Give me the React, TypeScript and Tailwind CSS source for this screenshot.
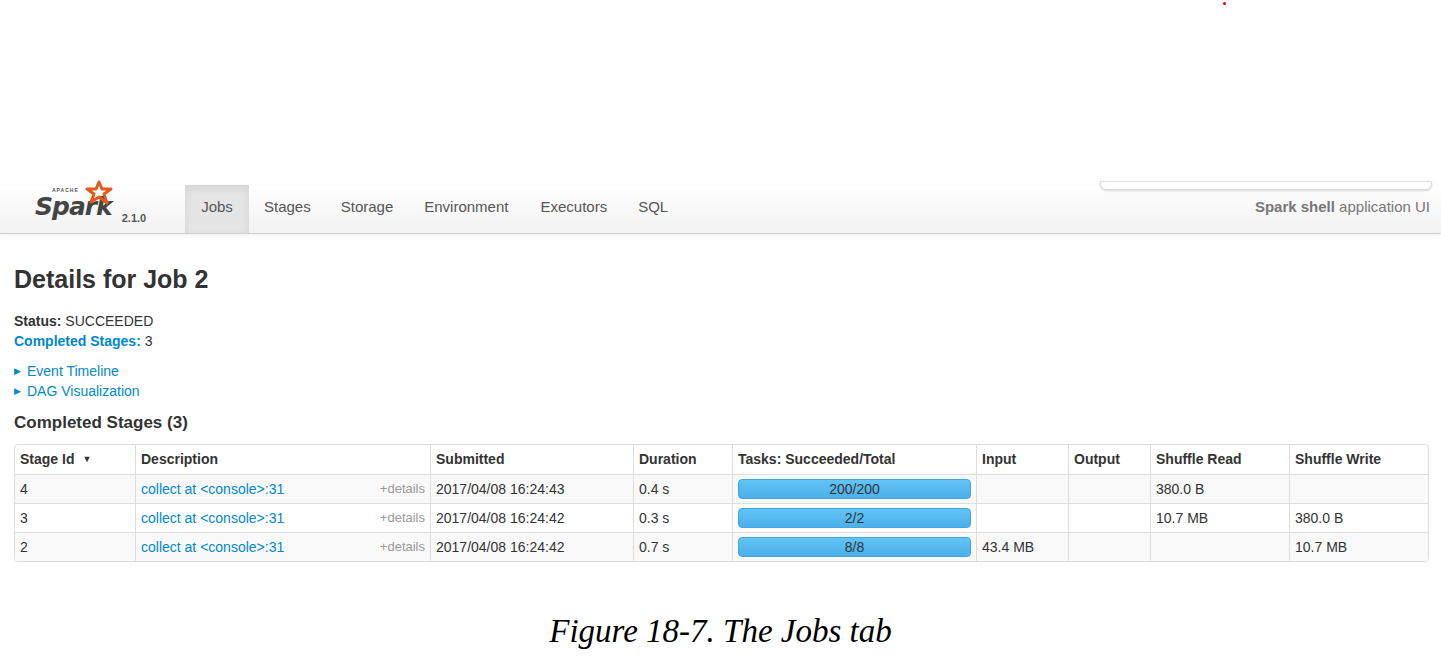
import React from "react";

const rows = [
  { id: "4", sub: "2017/04/08 16:24:43", dur: "0.4 s", tasks: "200/200", input: "", output: "", sr: "380.0 B", sw: "" },
  { id: "3", sub: "2017/04/08 16:24:42", dur: "0.3 s", tasks: "2/2", input: "", output: "", sr: "10.7 MB", sw: "380.0 B" },
  { id: "2", sub: "2017/04/08 16:24:42", dur: "0.7 s", tasks: "8/8", input: "43.4 MB", output: "", sr: "", sw: "10.7 MB" },
];
const cols = "grid grid-cols-[120px_295px_203px_99px_244px_92px_82px_139px_141px]";

export default function App() {
  return (
    <div className="relative w-[1441px] h-[658px] bg-white text-[#333] overflow-hidden" style={{ fontFamily: "'Liberation Sans', Arial, sans-serif" }}>
      <div className="absolute left-[1223px] top-[2px] w-[3px] h-[3px] rounded-full bg-[#e00]" />
      <div className="h-[185px]" />
      {/* navbar */}
      <div className="relative h-[49px] bg-gradient-to-b from-white to-[#f2f2f2] border-b border-[#d4d4d4] shadow-[0_1px_3px_rgba(0,0,0,0.08)] flex items-stretch">
        <div className="absolute left-[1100px] top-[-4px] w-[332px] h-[9px] bg-white rounded-b-md border border-[#ddd] shadow-[0_1px_2px_rgba(0,0,0,0.15)]" />
        <div className="w-[185px] relative flex items-end pl-[35px] pb-[11px]">
          <div className="relative">
            <span className="absolute left-[17px] top-[-6px] text-[5px] leading-none tracking-[1px] font-bold text-[#555]">APACHE</span>
            <span className="text-[25px] font-bold italic tracking-[-1px] text-[#444] leading-none" style={{ fontFamily: "'DejaVu Sans', sans-serif" }}>Spark</span>
            <svg className="absolute left-[50px] top-[-14px]" width="28" height="26" viewBox="0 0 28 26">
              <path d="M14 2 L17 9 L26 9 L19 14 L22 23 L14 17 L6 22 L9 14 L2 9 L11 9 Z" fill="none" stroke="#e25a1c" strokeWidth="3" strokeLinejoin="round" />
            </svg>
          </div>
          <span className="ml-[10px] text-[11px] font-bold text-[#555] mb-[-4px]">2.1.0</span>
        </div>
        <div className="flex text-[15px] text-[#555] pb-[4px]">
          <div className="w-[64px] bg-[#e5e5e5] flex items-center justify-center text-[#555] shadow-[inset_0_3px_8px_rgba(0,0,0,0.08)] mb-[-4px] pb-[4px]">Jobs</div>
          <div className="px-[15px] flex items-center">Stages</div>
          <div className="px-[15px] flex items-center">Storage</div>
          <div className="px-[16px] flex items-center">Environment</div>
          <div className="px-[16px] flex items-center">Executors</div>
          <div className="px-[15px] flex items-center">SQL</div>
        </div>
        <div className="ml-auto pr-[11px] pb-[4px] flex items-center text-[15px] text-[#777]">
          <b>Spark shell</b>&nbsp;application UI
        </div>
      </div>
      <div className="px-[14px]">
        <h3 className="text-[25px] font-bold text-[#333] mt-[33px] leading-none">Details for Job 2</h3>
        <div className="mt-[19px] text-[14px] leading-[20px]">
          <div><b>Status:</b> SUCCEEDED</div>
          <div><b className="text-[#0088cc]">Completed Stages:</b> 3</div>
        </div>
        <div className="mt-[10px] text-[14px] leading-[20px] text-[#0088cc]">
          <div className="flex items-center"><span className="text-[9px] mr-[6px]">▶</span>Event Timeline</div>
          <div className="flex items-center"><span className="text-[9px] mr-[6px]">▶</span>DAG Visualization</div>
        </div>
        <h4 className="mt-[10px] text-[17px] font-bold leading-[24px]">Completed Stages (3)</h4>
        <div className="mt-[9px] w-[1415px] border border-[#ddd] rounded text-[14px] overflow-hidden">
          <div className={`${cols} h-[29px] font-bold`}>
            <div className="px-[5px] flex items-center">Stage Id <span className="ml-[8px] text-[9px]">▼</span></div>
            {["Description", "Submitted", "Duration", "Tasks: Succeeded/Total", "Input", "Output", "Shuffle Read", "Shuffle Write"].map((h) => (
              <div key={h} className="px-[5px] flex items-center border-l border-[#ddd]">{h}</div>
            ))}
          </div>
          {rows.map((r, i) => (
            <div key={r.id} className={`${cols} h-[29px] border-t border-[#ddd] ${i % 2 === 0 ? "bg-[#f9f9f9]" : "bg-white"}`}>
              <div className="px-[5px] flex items-center">{r.id}</div>
              <div className="px-[5px] flex items-center border-l border-[#ddd]">
                <span className="text-[#0088cc]">collect at &lt;console&gt;:31</span>
                <span className="ml-auto text-[13px] text-[#999]">+details</span>
              </div>
              <div className="px-[5px] flex items-center border-l border-[#ddd]">{r.sub}</div>
              <div className="px-[5px] flex items-center border-l border-[#ddd]">{r.dur}</div>
              <div className="px-[5px] flex items-center border-l border-[#ddd]">
                <div className="w-full h-[20px] rounded bg-gradient-to-b from-[#62c4f6] to-[#4ab0ea] border border-[#44a6e0] flex items-center justify-center text-[#333]">{r.tasks}</div>
              </div>
              <div className="px-[5px] flex items-center border-l border-[#ddd]">{r.input}</div>
              <div className="px-[5px] flex items-center border-l border-[#ddd]">{r.output}</div>
              <div className="px-[5px] flex items-center border-l border-[#ddd]">{r.sr}</div>
              <div className="px-[5px] flex items-center border-l border-[#ddd]">{r.sw}</div>
            </div>
          ))}
        </div>
      </div>
      <div className="mt-[45px] text-center text-[33px] italic text-black" style={{ fontFamily: "'Liberation Serif', 'Times New Roman', serif" }}>
        Figure 18-7. The Jobs tab
      </div>
    </div>
  );
}
